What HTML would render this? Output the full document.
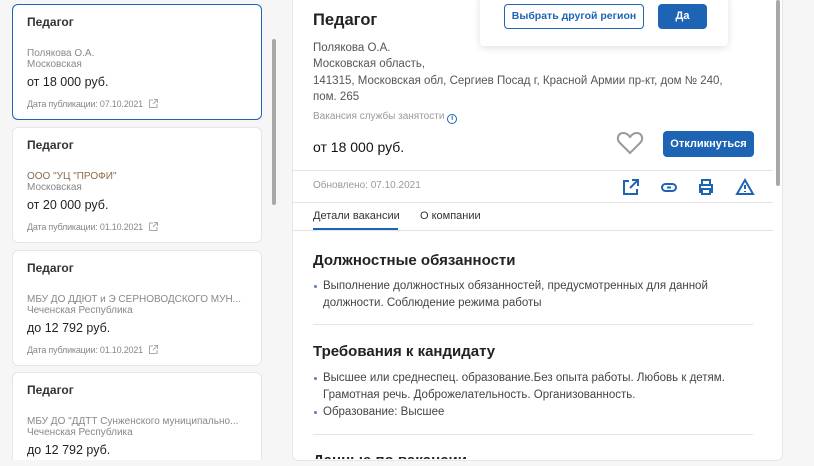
<!DOCTYPE html>
<html><head><meta charset="utf-8"><style>
*{margin:0;padding:0;box-sizing:border-box}
html,body{width:814px;height:466px;overflow:hidden}
body{background:#f6f6f6;font-family:"Liberation Sans",sans-serif;color:#222;position:relative}
.a{position:absolute;white-space:nowrap}
.list{position:absolute;left:0;top:0;width:290px;height:460px;overflow:hidden}
.card{position:absolute;left:12px;width:250px;background:#fff;border:1px solid #e6e6e6;border-radius:6px}
.card.sel{border:1px solid #1e64b4}
.t{position:absolute;left:14px;top:10px;font-size:12px;font-weight:bold;color:#333}
.o{position:absolute;left:14px;top:43px;font-size:10px;color:#888;line-height:11px;width:220px;overflow:hidden;text-overflow:ellipsis;white-space:nowrap}
.s{position:absolute;left:14px;top:70px;font-size:12.5px;color:#222}
.d{position:absolute;left:14px;top:94px;font-size:9px;color:#888;letter-spacing:-0.2px}
.ext{position:absolute;left:135px;top:93px}
.mainwrap{position:absolute;left:292px;top:0;width:492px;height:461px;overflow:hidden}
.main{position:absolute;left:0;top:-10px;width:491px;height:471px;background:#fff;border:1px solid #e6e6e6;border-radius:6px}
.hr{position:absolute;height:1px;background:#e4e4e4}
.btn{position:absolute;border-radius:4px;font-size:11px;font-weight:bold;text-align:center}
ul{list-style:none}
li{position:relative;padding-left:10px;font-size:11.5px;line-height:16.5px;color:#444}
li:before{content:"";position:absolute;left:1px;top:7px;width:3px;height:3px;border-radius:50%;background:#5a7fb0}
h3{position:absolute;left:313px;font-size:15px;font-weight:bold;color:#222;white-space:nowrap}
</style></head><body>
<div class="list">
<div class="card sel" style="top:4px;height:116px"><div class="t">Педагог</div><div class="o">Полякова О.А.<br>Московская</div><div class="s">от 18 000 руб.</div><div class="d">Дата публикации: 07.10.2021</div>
<svg class="ext" width="11" height="11" viewBox="0 0 11 11" fill="none" stroke="#aaa" stroke-width="1"><path d="M5 2H1.5V9.5H9V6M6 1.5H9.5V5M9.5 1.5L5 6"/></svg></div>
<div class="card" style="top:127px;height:116px"><div class="t">Педагог</div><div class="o" style="color:#8a6a4a">ООО "УЦ "ПРОФИ"<br><span style="color:#888">Московская</span></div><div class="s">от 20 000 руб.</div><div class="d">Дата публикации: 01.10.2021</div>
<svg class="ext" width="11" height="11" viewBox="0 0 11 11" fill="none" stroke="#aaa" stroke-width="1"><path d="M5 2H1.5V9.5H9V6M6 1.5H9.5V5M9.5 1.5L5 6"/></svg></div>
<div class="card" style="top:250px;height:116px"><div class="t">Педагог</div><div class="o">МБУ ДО ДДЮТ и Э СЕРНОВОДСКОГО МУН...<br>Чеченская Республика</div><div class="s">до 12 792 руб.</div><div class="d">Дата публикации: 01.10.2021</div>
<svg class="ext" width="11" height="11" viewBox="0 0 11 11" fill="none" stroke="#aaa" stroke-width="1"><path d="M5 2H1.5V9.5H9V6M6 1.5H9.5V5M9.5 1.5L5 6"/></svg></div>
<div class="card" style="top:372px;height:116px"><div class="t">Педагог</div><div class="o">МБУ ДО "ДДТТ Сунженского муниципально...<br>Чеченская Республика</div><div class="s">до 12 792 руб.</div></div>
<div style="position:absolute;left:272px;top:39px;width:4px;height:166px;background:#a8a8a8;border-radius:2px"></div>
</div>

<div class="mainwrap"><div class="main"></div></div>
<div style="position:absolute;left:776px;top:0;width:4px;height:186px;background:#a8a8a8;border-radius:2px"></div>
<div class="a" style="left:313px;top:11px;font-size:16.5px;font-weight:bold">Педагог</div>
<div class="a" style="left:313px;top:40px;font-size:11.5px;line-height:16.3px;color:#555">Полякова О.А.<br>Московская область,<br>141315, Московская обл, Сергиев Посад г, Красной Армии пр-кт, дом № 240,<br>пом. 265</div>
<div class="a" style="left:313px;top:111px;font-size:10px;color:#999">Вакансия службы занятости <span style="display:inline-block;width:10px;height:10px;border:1px solid #1e64b4;border-radius:50%;color:#1e64b4;font-size:7px;text-align:center;line-height:8px;font-weight:bold;vertical-align:-1px">i</span></div>
<div class="a" style="left:313px;top:139px;font-size:14px;color:#111">от 18 000 руб.</div>
<svg class="a" style="left:616px;top:131px" width="28" height="24" viewBox="0 0 28 24" fill="none" stroke="#999" stroke-width="2"><path d="M14 22L4 12C0 8 2 2 7.5 2C10.5 2 12.5 4 14 6C15.5 4 17.5 2 20.5 2C26 2 28 8 24 12Z"/></svg>
<div class="btn" style="left:663px;top:131px;width:91px;height:26px;background:#1e64b4;color:#fff;line-height:26px">Откликнуться</div>
<div class="hr" style="left:293px;top:170px;width:480px"></div>
<div class="a" style="left:313px;top:180px;font-size:10px;color:#999">Обновлено: 07.10.2021</div>
<svg class="a" style="left:622px;top:178px" width="140" height="20" fill="none" stroke="#1e64b4" stroke-width="2">
<path d="M7 3H2V16H15V11M10 2H16V8M16 2L8 10"/>
<rect x="40" y="6" width="14" height="7" rx="3.5"/><path d="M45 9.5H49"/>
<path d="M80 6V2H88V6M80 14H78V7H90V14H88M80 11H88V16H80Z"/>
<path d="M123 2L115 16H131Z M123 7V11 M123 13V14"/>
</svg>
<div class="hr" style="left:293px;top:202px;width:480px"></div>
<div class="a" style="left:313px;top:210px;font-size:11px;color:#333">Детали вакансии</div>
<div class="a" style="left:420px;top:210px;font-size:11px;color:#333">О компании</div>
<div class="hr" style="left:293px;top:230px;width:480px"></div>
<div style="position:absolute;left:313px;top:228px;width:85px;height:2px;background:#1e64b4"></div>
<h3 style="top:252px">Должностные обязанности</h3>
<ul class="a" style="left:313px;top:278px"><li>Выполнение должностных обязанностей, предусмотренных для данной<br>должности. Соблюдение режима работы</li></ul>
<div class="hr" style="left:313px;top:324px;width:440px"></div>
<h3 style="top:343px">Требования к кандидату</h3>
<ul class="a" style="left:313px;top:370px"><li>Высшее или среднеспец. образование.Без опыта работы. Любовь к детям.<br>Грамотная речь. Доброжелательность. Организованность.</li><li style="margin-top:1px">Образование: Высшее</li></ul>
<div class="hr" style="left:313px;top:434px;width:440px"></div>
<div style="position:absolute;left:313px;top:452px;height:7px;overflow:hidden"><div style="font-size:15px;font-weight:bold;color:#222;white-space:nowrap">Данные по вакансии</div></div>

<div style="position:absolute;left:480px;top:-8px;width:248px;height:54px;background:#fff;border-radius:4px;box-shadow:0 2px 8px rgba(0,0,0,0.12)"></div>
<div class="btn" style="left:504px;top:4px;width:140px;height:25px;border:1px solid #1e64b4;color:#1e64b4;line-height:23px;font-size:10.5px">Выбрать другой регион</div>
<div class="btn" style="left:658px;top:4px;width:49px;height:25px;background:#1e64b4;color:#fff;line-height:25px">Да</div>
</body></html>
